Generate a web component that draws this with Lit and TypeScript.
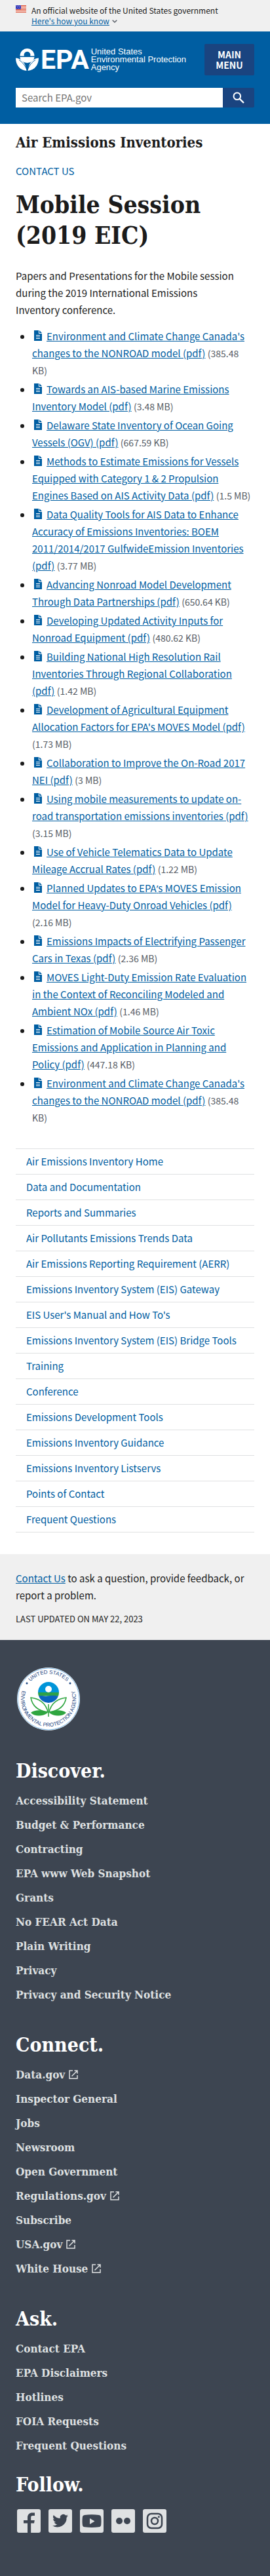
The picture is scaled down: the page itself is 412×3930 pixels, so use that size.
import { LitElement, html, css, svg, nothing } from "lit";
import { customElement } from "lit/decorators.js";

interface Doc {
  title: string;
  size: string;
}

interface FooterLink {
  label: string;
  external?: boolean;
}

const documents: Doc[] = [
  { title: "Environment and Climate Change Canada's changes to the NONROAD model (pdf)", size: "385.48 KB" },
  { title: "Towards an AIS-based Marine Emissions Inventory Model (pdf)", size: "3.48 MB" },
  { title: "Delaware State Inventory of Ocean Going Vessels (OGV) (pdf)", size: "667.59 KB" },
  { title: "Methods to Estimate Emissions for Vessels Equipped with Category 1 & 2 Propulsion Engines Based on AIS Activity Data (pdf)", size: "1.5 MB" },
  { title: "Data Quality Tools for AIS Data to Enhance Accuracy of Emissions Inventories: BOEM 2011/2014/2017 GulfwideEmission Inventories (pdf)", size: "3.77 MB" },
  { title: "Advancing Nonroad Model Development Through Data Partnerships (pdf)", size: "650.64 KB" },
  { title: "Developing Updated Activity Inputs for Nonroad Equipment (pdf)", size: "480.62 KB" },
  { title: "Building National High Resolution Rail Inventories Through Regional Collaboration (pdf)", size: "1.42 MB" },
  { title: "Development of Agricultural Equipment Allocation Factors for EPA's MOVES Model (pdf)", size: "1.73 MB" },
  { title: "Collaboration to Improve the On-Road 2017 NEI (pdf)", size: "3 MB" },
  { title: "Using mobile measurements to update on-road transportation emissions inventories (pdf)", size: "3.15 MB" },
  { title: "Use of Vehicle Telematics Data to Update Mileage Accrual Rates (pdf)", size: "1.22 MB" },
  { title: "Planned Updates to EPA\u2019s MOVES Emission Model for Heavy-Duty Onroad Vehicles (pdf)", size: "2.16 MB" },
  { title: "Emissions Impacts of Electrifying Passenger Cars in Texas (pdf)", size: "2.36 MB" },
  { title: "MOVES Light-Duty Emission Rate Evaluation in the Context of Reconciling Modeled and Ambient NOx (pdf)", size: "1.46 MB" },
  { title: "Estimation of Mobile Source Air Toxic Emissions and Application in Planning and Policy (pdf)", size: "447.18 KB" },
  { title: "Environment and Climate Change Canada's changes to the NONROAD model (pdf)", size: "385.48 KB" },
];

const sectionLinks: string[] = [
  "Air Emissions Inventory Home",
  "Data and Documentation",
  "Reports and Summaries",
  "Air Pollutants Emissions Trends Data",
  "Air Emissions Reporting Requirement (AERR)",
  "Emissions Inventory System (EIS) Gateway",
  "EIS User's Manual and How To's",
  "Emissions Inventory System (EIS) Bridge Tools",
  "Training",
  "Conference",
  "Emissions Development Tools",
  "Emissions Inventory Guidance",
  "Emissions Inventory Listservs",
  "Points of Contact",
  "Frequent Questions",
];

const footerGroups: { heading: string; links: FooterLink[] }[] = [
  {
    heading: "Discover.",
    links: [
      { label: "Accessibility Statement" },
      { label: "Budget & Performance" },
      { label: "Contracting" },
      { label: "EPA www Web Snapshot" },
      { label: "Grants" },
      { label: "No FEAR Act Data" },
      { label: "Plain Writing" },
      { label: "Privacy" },
      { label: "Privacy and Security Notice" },
    ],
  },
  {
    heading: "Connect.",
    links: [
      { label: "Data.gov", external: true },
      { label: "Inspector General" },
      { label: "Jobs" },
      { label: "Newsroom" },
      { label: "Open Government" },
      { label: "Regulations.gov", external: true },
      { label: "Subscribe" },
      { label: "USA.gov", external: true },
      { label: "White House", external: true },
    ],
  },
  {
    heading: "Ask.",
    links: [
      { label: "Contact EPA" },
      { label: "EPA Disclaimers" },
      { label: "Hotlines" },
      { label: "FOIA Requests" },
      { label: "Frequent Questions" },
    ],
  },
];

const socialLinks = [
  {
    label: "Facebook",
    glyph: svg`<path d="M16 36V21.500h-6v-4.500h6v-4c0-5 3-7.500 7.500-7.500h3.500v4.500h-3c-2.200 0-2.800 1-2.800 2.800v4.200h5.600l-.8 4.500h-4.800V36z"/>`,
  },
  {
    label: "Twitter",
    glyph: svg`<path transform="translate(5.500 5.500)" d="M24.500 4.800a10 10 0 0 1-2.800.8 5 5 0 0 0 2.200-2.700 10 10 0 0 1-3.100 1.200 4.900 4.900 0 0 0-8.400 4.500A14 14 0 0 1 2.300 3.400a4.900 4.900 0 0 0 1.500 6.500 4.900 4.900 0 0 1-2.200-.6c0 2.400 1.700 4.400 3.900 4.900a5 5 0 0 1-2.200.1 4.900 4.900 0 0 0 4.600 3.400A9.900 9.900 0 0 1 .6 19.700a14 14 0 0 0 21.500-12.400 10 10 0 0 0 2.400-2.500z"/>`,
  },
  {
    label: "YouTube",
    glyph: svg`<path fill-rule="evenodd" d="M7 9c7-1 15-1 22 0 2 .3 3 1.500 3.200 3.500.4 4 .4 8 0 11.500-.2 2-1.200 3-3.200 3.300-7 .9-15 .9-22 0-2-.3-3-1.300-3.200-3.300-.4-3.500-.4-7.500 0-11.500C4 10.500 5 9.300 7 9zm8 5v9l7.500-4.500z"/>`,
  },
  {
    label: "Flickr",
    glyph: svg`<circle cx="12" cy="18" r="5"/><circle cx="24" cy="18" r="5"/>`,
  },
  {
    label: "Instagram",
    glyph: svg`<g fill="none" stroke="#3d4551" stroke-width="2.500"><rect x="7" y="7" width="22" height="22" rx="6"/><circle cx="18" cy="18" r="5"/></g><circle cx="24.300" cy="11.700" r="1.500"/>`,
  },
];

const flagIcon = html`
  <svg class="flag" viewBox="0 0 16 11" aria-hidden="true">
    <rect width="16" height="11" fill="#fff" />
    <path d="M0 .5h16M0 2.500h16M0 4.500h16M0 6.500h16M0 8.500h16M0 10.500h16" stroke="#db3e1f" />
    <rect width="8" height="6" fill="#2a2fb5" />
    <g fill="#fff">
      <circle cx="1.200" cy="1" r=".5" /><circle cx="4" cy="1" r=".5" /><circle cx="6.800" cy="1" r=".5" />
      <circle cx="2.600" cy="2.800" r=".5" /><circle cx="5.400" cy="2.800" r=".5" />
      <circle cx="1.200" cy="4.700" r=".5" /><circle cx="4" cy="4.700" r=".5" /><circle cx="6.800" cy="4.700" r=".5" />
    </g>
  </svg>
`;

const fileIcon = html`<svg class="file-icon" viewBox="0 0 12 16" aria-hidden="true"><path fill="#005ea2" fill-rule="evenodd" d="M0 0h7v5h5v11H0zM3 7v1h6V7zm0 2.500v1h6v-1zM3 12v1h6v-1z"/><path fill="#005ea2" d="M8 0l4 4H8z"/></svg>`;

const externalIcon = html`<svg class="external-icon" viewBox="0 0 14 14" aria-hidden="true"><path fill="none" stroke="#dfe1e2" stroke-width="1.500" d="M6 1H1v12h12V8M8.500 1H13v4.500M13 1L4.500 9.500"/></svg>`;

const flowerMark = html`
  <svg class="flower" viewBox="0 0 35 36" aria-hidden="true">
    <g fill="#fff">
      <path fill-rule="evenodd" d="M6.500 12.500a11 11.500 0 0 1 22 0h-6.300a5 5 0 1 0-9.400 0z" />
      <path d="M6.500 14h22a11 9 0 0 1-22 0z" />
      <path d="M0 15.500c9 1 15 7 16.500 19.500C6 34 0 26 0 15.500zM35 15.500c-9 1-15 7-16.500 19.500C29 34 35 26 35 15.500z" />
    </g>
    <path d="M5 18.500c5 3 9 8 12 15M30 18.500c-5 3-9 8-12 15" fill="none" stroke="#005ea2" stroke-width="1" />
  </svg>
`;

const seal = html`
  <svg class="seal" viewBox="0 0 96 96" role="img" aria-label="U.S. EPA seal">
    <defs>
      <path id="seal-top" d="M9.500 48a38.500 38.500 0 0 1 77 0" />
      <path id="seal-bottom" d="M13.300 24.500A42 42 0 1 0 82.700 24.500" />
    </defs>
    <circle cx="48" cy="48" r="48" fill="#fff" />
    <circle cx="48" cy="48" r="47" fill="none" stroke="#7db9e8" stroke-width="1" />
    <g class="seal-text">
      <text text-anchor="middle"><textPath href="#seal-top" startOffset="50%">UNITED STATES</textPath></text>
      <text text-anchor="middle"><textPath href="#seal-bottom" startOffset="50%">ENVIRONMENTAL PROTECTION AGENCY</textPath></text>
    </g>
    <circle cx="15" cy="24" r="1.500" fill="#1a4480" />
    <circle cx="81" cy="24" r="1.500" fill="#1a4480" />
    <path d="M32 38a16 16 0 0 1 32 0z" fill="#0095d9" />
    <path d="M32 38h32a16 16 0 0 1-1 5.500H33A16 16 0 0 1 32 38z" fill="#2ea148" />
    <path d="M33 43.500c5-1.500 8 1 13 0s12-1 17 0a16 16 0 0 1-30 0z" fill="#0a64c0" />
    <circle cx="48" cy="33" r="5" fill="#fff" />
    <g fill="none" stroke="#2ea53f" stroke-width="1.500">
      <path d="M47 68C44 54 33 47 21 46c2 11 10 20 26 22zM49 68c3-14 14-21 26-22-2 11-10 20-26 22z" />
      <path d="M48 56v19" />
    </g>
    <path d="M47 69c-8-5-20-5-26 0 6 6 18 6 26 0zM49 69c8-5 20-5 26 0-6 6-18 6-26 0z" fill="#2ea53f" />
  </svg>
`;

@customElement("app-root")
export class AppRoot extends LitElement {
  static styles = css`
    :host {
      display: block;
      background: #fff;
      color: #1b1b1b;
      font-family: "Noto Sans CJK SC", "Noto Sans", sans-serif;
      font-size: 15px;
      line-height: 26px;
      --serif: "DejaVu Serif Condensed", "DejaVu Serif", serif;
      --link: #005ea2;
    }
    * {
      box-sizing: border-box;
    }
    h1, h2, p, ul {
      margin: 0;
      padding: 0;
    }
    a {
      color: var(--link);
    }
    svg {
      display: block;
    }
    .hidden-label {
      position: absolute;
      clip-path: inset(50%);
    }

    .banner {
      display: flex;
      gap: 8px;
      padding: 8px 24px;
      background: #f0f0f0;
      font-size: 12px;
      line-height: 16px;
    }
    .flag {
      width: 16px;
      height: 11px;
    }
    .banner-toggle {
      display: flex;
      align-items: center;
      gap: 4px;
      padding: 0;
      border: 0;
      background: none;
      color: var(--link);
      font: inherit;
      text-decoration: underline;
    }
    .chevron {
      width: 8px;
      height: 5px;
    }

    .header {
      display: grid;
      gap: 19px;
      padding: 19px 24px 25px;
      background: #005ea2;
    }
    .header-bar {
      display: flex;
      align-items: center;
      justify-content: space-between;
    }
    .logo {
      display: flex;
      align-items: center;
      gap: 3px;
      color: #fff;
      text-decoration: none;
    }
    .flower {
      width: 35px;
      height: 36px;
    }
    .wordmark {
      font: bold 41px/36px Roboto, "Liberation Sans", sans-serif;
    }
    .agency {
      font: 13px/12px "Liberation Sans", sans-serif;
    }
    .menu-button {
      width: 76px;
      height: 48px;
      padding: 0 16px;
      border: 0;
      border-radius: 2px;
      background: #1a4480;
      color: #fff;
      font: bold 14px/16px "Noto Sans CJK SC", sans-serif;
    }
    .search {
      display: flex;
      height: 30px;
    }
    .search-input {
      flex: 1;
      min-width: 0;
      padding: 0 8px;
      border: 1px solid #fff;
      border-radius: 0;
      background: #fff;
      color: #1b1b1b;
      font: inherit;
    }
    .search-input::placeholder {
      color: #757575;
      opacity: 1;
    }
    .search-button {
      display: grid;
      place-items: center;
      width: 48px;
      padding: 0;
      border: 0;
      border-radius: 0 2px 2px 0;
      background: #1a4480;
    }
    .search-icon {
      width: 18px;
      height: 18px;
    }

    .content {
      padding: 14px 24px 33px;
    }
    .site-name {
      font: bold 22px/28px var(--serif);
    }
    .contact-link {
      display: block;
      margin-top: 17px;
      text-decoration: none;
    }
    .page-title {
      margin-top: 15px;
      font: bold 37px/47px var(--serif);
    }
    .intro {
      margin-top: 25px;
    }
    .documents {
      display: grid;
      gap: 3px;
      margin-top: 14px;
      padding-left: 25px;
    }
    .file-icon {
      display: inline-block;
      width: 12px;
      height: 16px;
      margin: 0 7px 0 3px;
      vertical-align: -1px;
    }
    .apostrophe {
      font-family: "Noto Sans", sans-serif;
      line-height: 16px;
    }
    .file-size {
      color: #565c65;
      font-size: 14px;
      line-height: 16px;
    }
    .section-nav {
      margin-top: 34px;
      border-top: 1px solid #dfe1e2;
      list-style: none;
    }
    .section-item {
      padding: 6px 16px;
      border-bottom: 1px solid #dfe1e2;
    }
    .section-link {
      display: block;
      text-decoration: none;
    }

    .page-info {
      padding: 24px 24px 19px;
      background: #f0f0f0;
    }
    .updated {
      margin-top: 10px;
      font-size: 13px;
      text-transform: uppercase;
    }

    .footer {
      padding: 42px 24px 67px;
      background: #3d4551;
      color: #fff;
    }
    .seal {
      width: 96px;
      height: 96px;
      margin-left: 2px;
    }
    .seal-text {
      fill: #1a4480;
      font: 8px "Liberation Sans", sans-serif;
    }
    .footer-groups {
      display: grid;
      gap: 44px;
      margin-top: 42px;
    }
    .footer-heading {
      font: bold 30px/40px var(--serif);
    }
    .footer-list {
      display: grid;
      gap: 11px;
      margin-top: 12px;
      list-style: none;
    }
    .footer-link {
      display: flex;
      align-items: center;
      gap: 6px;
      color: #dfe1e2;
      font: bold 17px/26px var(--serif);
      text-decoration: none;
    }
    .external-icon {
      width: 14px;
      height: 14px;
    }
    .follow {
      margin-top: 27px;
    }
    .social {
      display: flex;
      gap: 12px;
      margin: 17px 0 0 2px;
      list-style: none;
    }
    .social-link {
      display: block;
    }
    .social-icon {
      width: 36px;
      height: 36px;
      fill: #3d4551;
    }
  `;

  /* The CJK face draws a curly apostrophe full-width, so it is set in the Latin face. */
  private renderTitle(title: string) {
    const [head, tail] = title.split("\u2019");
    return tail === undefined ? head : html`${head}<span class="apostrophe">&rsquo;</span>${tail}`;
  }

  private renderFooterLink(link: FooterLink) {
    return html`<li>
      <a class="footer-link" href="#">${link.label}${link.external ? externalIcon : nothing}</a>
    </li>`;
  }

  render() {
    return html`
      <section class="banner" aria-label="Official government website">
        ${flagIcon}
        <div>
          <p>An official website of the United States government</p>
          <button class="banner-toggle" type="button">
            Here's how you know
            <svg class="chevron" viewBox="0 0 8 5" aria-hidden="true">
              <path d="M.7.700L4 4 7.300.700" fill="none" stroke="#565c65" stroke-width="1.400" />
            </svg>
          </button>
        </div>
      </section>

      <header class="header">
        <div class="header-bar">
          <a class="logo" href="#">
            ${flowerMark}
            <span class="wordmark">EPA</span>
            <span class="agency">United States<br />Environmental Protection<br />Agency</span>
          </a>
          <button class="menu-button" type="button">MAIN MENU</button>
        </div>
        <form class="search" role="search">
          <label class="hidden-label" for="search-field">Search</label>
          <input class="search-input" id="search-field" type="search" placeholder="Search EPA.gov" />
          <button class="search-button" type="button" aria-label="Search">
            <svg class="search-icon" viewBox="0 0 18 18" aria-hidden="true">
              <circle cx="6.800" cy="6.800" r="5.300" fill="none" stroke="#fff" stroke-width="2" />
              <path d="M10.800 10.800L17 17" stroke="#fff" stroke-width="2.400" />
            </svg>
          </button>
        </form>
      </header>

      <main class="content">
        <h2 class="site-name">Air Emissions Inventories</h2>
        <a class="contact-link" href="#">CONTACT US</a>
        <h1 class="page-title">Mobile Session (2019 EIC)</h1>
        <p class="intro">
          Papers and Presentations for the Mobile session during the 2019 International Emissions
          Inventory&nbsp;conference.
        </p>
        <ul class="documents">
          ${documents.map(
            (doc) => html`<li><a href="#">${fileIcon}${this.renderTitle(doc.title)}</a> <span class="file-size">(${doc.size})</span></li>`
          )}
        </ul>
        <nav aria-label="Section">
          <ul class="section-nav">
            ${sectionLinks.map(
              (label) => html`<li class="section-item"><a class="section-link" href="#">${label}</a></li>`
            )}
          </ul>
        </nav>
      </main>

      <section class="page-info">
        <p><a href="#">Contact Us</a> to ask a question, provide feedback, or report a problem.</p>
        <p class="updated">Last updated on May 22, 2023</p>
      </section>

      <footer class="footer">
        ${seal}
        <div class="footer-groups">
          ${footerGroups.map(
            (group) => html`
              <section>
                <h2 class="footer-heading">${group.heading}</h2>
                <ul class="footer-list">
                  ${group.links.map((link) => this.renderFooterLink(link))}
                </ul>
              </section>
            `
          )}
        </div>
        <h2 class="footer-heading follow">Follow.</h2>
        <ul class="social">
          ${socialLinks.map(
            (item) => html`<li>
              <a class="social-link" href="#" aria-label=${item.label}>
                <svg class="social-icon" viewBox="0 0 36 36" aria-hidden="true">
                  <rect width="36" height="36" rx="3" fill="#dfe1e2" />
                  ${item.glyph}
                </svg>
              </a>
            </li>`
          )}
        </ul>
      </footer>
    `;
  }
}
